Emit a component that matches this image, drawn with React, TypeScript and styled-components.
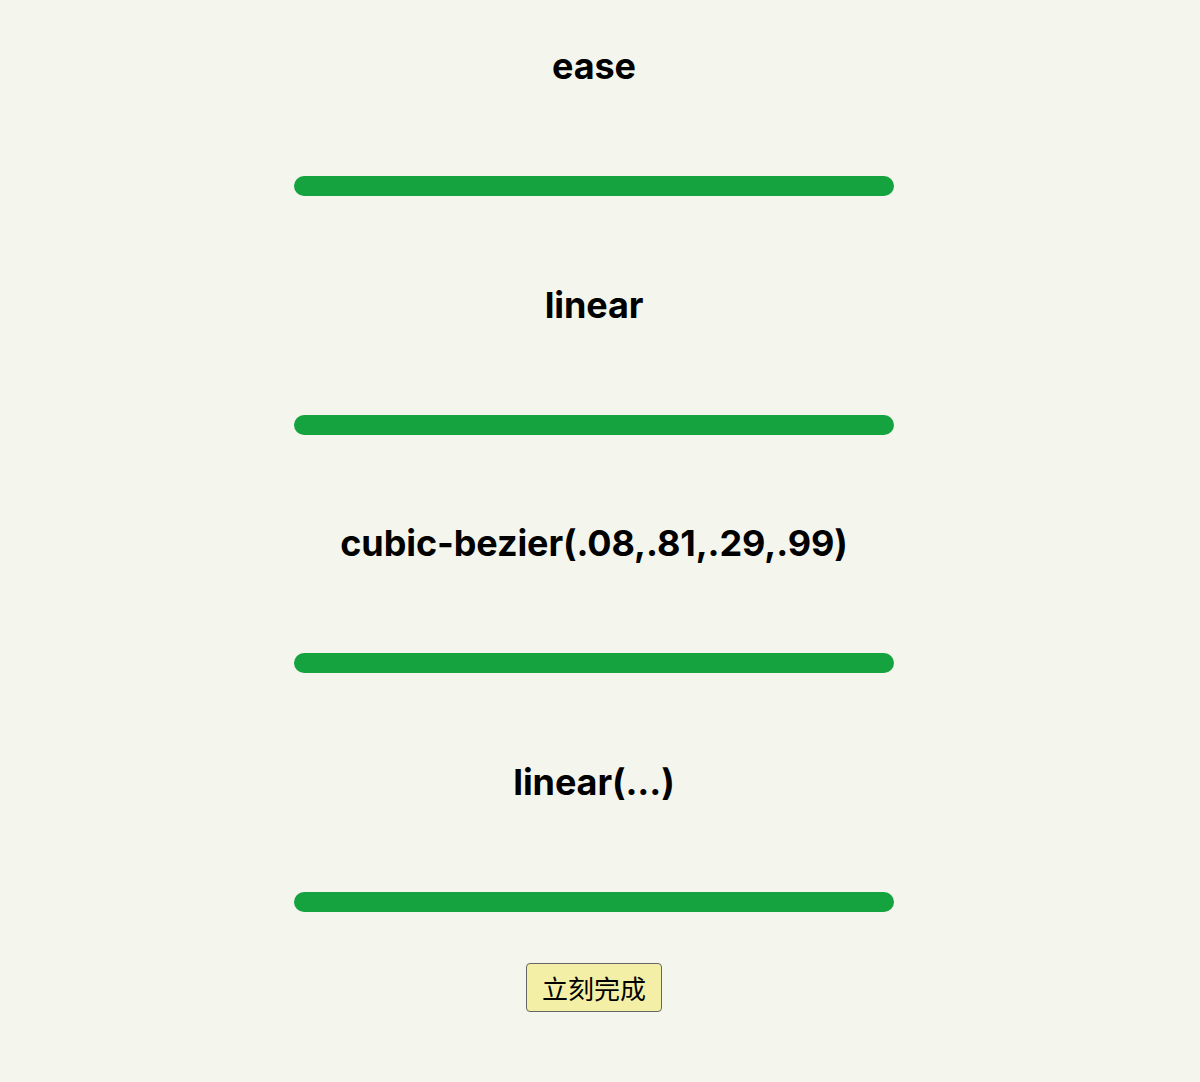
import React from "react";
import styled, { createGlobalStyle } from "styled-components";

const Global = createGlobalStyle`
  html, body {
    margin: 0;
    padding: 0;
    background: #f4f6ee;
  }
  body {
    font-family: Inter, "Liberation Sans", Arial, sans-serif;
    color: #000;
  }
`;

const Page = styled.main`
  display: flex;
  flex-direction: column;
  align-items: center;
  padding: 47px 12px 0 0;
  min-height: 1082px;
  box-sizing: border-box;
`;

const List = styled.div`
  display: flex;
  flex-direction: column;
  align-items: center;
  gap: 89.25px;
`;

const Title = styled.h2`
  margin: 0;
  font-family: Inter, "Liberation Sans", Arial, sans-serif;
  font-weight: 700;
  font-size: 36px;
  line-height: 38px;
  height: 40px;
  text-align: center;
  white-space: nowrap;
  letter-spacing: -0.1px;
`;

const Track = styled.div`
  width: 600px;
  height: 20px;
  border-radius: 10px;
  background: #14a33f;
`;

const DoneButton = styled.button`
  margin-top: 51px;
  padding: 8px 15px;
  font-family: "Noto Sans CJK SC", "Noto Sans CJK JP", sans-serif;
  font-size: 26px;
  line-height: 1.2;
  color: #000;
  background: #f3efa6;
  border: 1px solid #666;
  border-radius: 4px;
  cursor: pointer;
`;

const timings = [
  "ease",
  "linear",
  "cubic-bezier(.08,.81,.29,.99)",
  "linear(...)",
];

export default function App() {
  return (
    <>
      <Global />
      <Page>
        <List>
          {timings.map((t) => (
            <React.Fragment key={t}>
              <Title>{t}</Title>
              <Track />
            </React.Fragment>
          ))}
        </List>
        <DoneButton type="button">立刻完成</DoneButton>
      </Page>
    </>
  );
}
